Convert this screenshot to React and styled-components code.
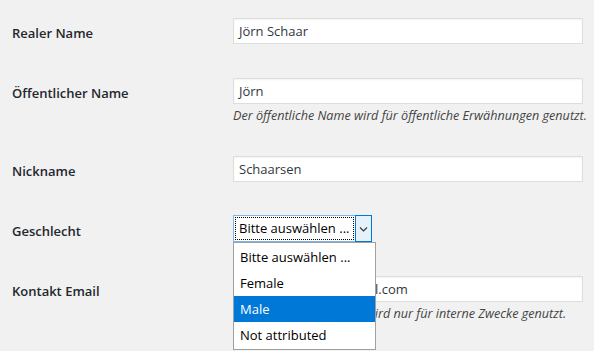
import React from 'react';
import styled, { createGlobalStyle } from 'styled-components';

const GlobalStyle = createGlobalStyle`
  html, body {
    margin: 0;
    padding: 0;
    background: #f1f1f1;
  }
  body {
    font-family: 'Open Sans', 'Noto Sans', sans-serif;
    color: #32373c;
  }
`;

const Page = styled.div`
  width: 594px;
  height: 351px;
  overflow: hidden;
  background: #f1f1f1;
`;

const FormTable = styled.div`
  display: grid;
  grid-template-columns: 233px 350px;
`;

const Label = styled.div`
  padding: 24px 0 0 12px;
  font-size: 13px;
  line-height: 18px;
  font-weight: 600;
  color: #23282d;
`;

const Field = styled.div`
  position: relative;
  padding: 18px 0 16px;
`;

const TextInput = styled.div`
  box-sizing: border-box;
  height: 26px;
  width: 350px;
  padding: 0 5px;
  background: #fff;
  border: 1px solid #dddddd;
  box-shadow: inset 0 1px 2px rgba(0, 0, 0, 0.05);
  font-size: 13px;
  line-height: 24px;
  color: #32373c;
  white-space: nowrap;
  overflow: hidden;
`;

const Description = styled.div`
  margin-top: 5px;
  font-size: 12.6px;
  line-height: 13px;
  font-style: italic;
  color: #444;
  white-space: nowrap;
`;

const SelectBox = styled.div`
  box-sizing: border-box;
  display: flex;
  width: 139px;
  height: 27px;
  margin-top: -1px;
  border: 1px solid #7eb4ea;
  background: #fff;
`;

const SelectValue = styled.div`
  flex: 1;
  margin: 1px;
  padding: 0 3px;
  border: 1px dotted #000;
  font-size: 13px;
  line-height: 21px;
  color: #000;
  white-space: nowrap;
  overflow: hidden;
`;

const ArrowButton = styled.div`
  box-sizing: border-box;
  width: 17px;
  margin: -1px -1px -1px 0;
  display: flex;
  align-items: center;
  justify-content: center;
  background: #e5f1fb;
  border: 1px solid #0078d7;
`;

const OptionList = styled.div`
  position: absolute;
  left: 0;
  top: 44px;
  z-index: 2;
  box-sizing: border-box;
  width: 143px;
  padding: 1px 0;
  background: #fff;
  border: 1px solid #a0a0a0;
`;

const Option = styled.div`
  height: 26px;
  padding: 0 6px;
  font-size: 13px;
  line-height: 26px;
  white-space: nowrap;
  color: ${p => (p.$selected ? '#fff' : '#000')};
  background: ${p => (p.$selected ? '#0078d7' : 'transparent')};
`;

const Chevron = () => (
  <svg width="9" height="6" viewBox="0 0 9 6">
    <path d="M1 1.5 L4.5 5 L8 1.5" fill="none" stroke="#333" strokeWidth="1.1" />
  </svg>
);

const options = ['Bitte auswählen ...', 'Female', 'Male', 'Not attributed'];

export default function App() {
  return (
    <Page>
      <GlobalStyle />
      <FormTable>
        <Label>Realer Name</Label>
        <Field>
          <TextInput>Jörn Schaar</TextInput>
        </Field>

        <Label>Öffentlicher Name</Label>
        <Field>
          <TextInput>Jörn</TextInput>
          <Description>Der öffentliche Name wird für öffentliche Erwähnungen genutzt.</Description>
        </Field>

        <Label>Nickname</Label>
        <Field>
          <TextInput>Schaarsen</TextInput>
        </Field>

        <Label>Geschlecht</Label>
        <Field>
          <SelectBox>
            <SelectValue>Bitte auswählen ...</SelectValue>
            <ArrowButton>
              <Chevron />
            </ArrowButton>
          </SelectBox>
          <OptionList>
            {options.map(o => (
              <Option key={o} $selected={o === 'Male'}>
                {o}
              </Option>
            ))}
          </OptionList>
        </Field>

        <Label>Kontakt Email</Label>
        <Field>
          <TextInput>joern.schaars@hotmail.com</TextInput>
          <Description>Die E-Mail des Kontakts wird nur für interne Zwecke genutzt.</Description>
        </Field>
      </FormTable>
    </Page>
  );
}
